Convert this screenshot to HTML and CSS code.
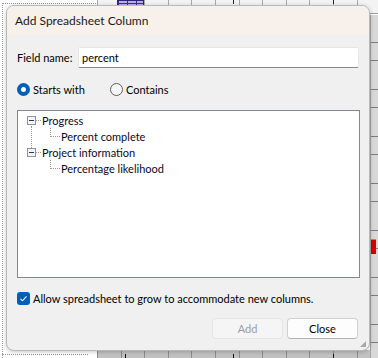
FILE: index.html
```html
<!DOCTYPE html>
<html>
<head>
<meta charset="utf-8">
<title>Add Spreadsheet Column</title>
<link rel="stylesheet" href="styles.css">
</head>
<body>
<div class="stage">
  <div class="bg-dots-v"></div>
  <div class="bg-dots-top"></div>
  <div class="bg-dots-bottom"></div>
  <div class="bg-toprow"></div>
  <div class="bg-tick bg-tick-a"></div>
  <div class="bg-tick bg-tick-b"></div>
  <div class="bg-purple"></div>
  <div class="bg-bottomrow"></div>
  <div class="bg-bottick bg-bottick-a"></div>
  <div class="bg-bottick bg-bottick-b"></div>
  <div class="bg-bottick bg-bottick-c"></div>
  <div class="bg-rightstrip"></div>
  <div class="bg-red"></div>

  <div class="dialog">
    <div class="titlebar">Add Spreadsheet Column</div>
    <div class="content">
      <div class="field-row">
        <label class="field-label">Field name:</label>
        <div class="input">percent</div>
      </div>
      <div class="radio-row">
        <div class="radio-item checked"><span class="radio"></span><span>Starts with</span></div>
        <div class="radio-item"><span class="radio"></span><span>Contains</span></div>
      </div>
      <div class="tree">
        <div class="group has-next">
          <div class="node">
            <svg class="expander" width="9" height="9" viewBox="0 0 9 9"><rect x="0.5" y="0.5" width="8" height="8" fill="#f4f4f4" stroke="#8e949c"/><path d="M2 4.5h5" stroke="#1f3a66" stroke-width="1"/></svg>
            <span class="hline"></span>
            <span class="label">Progress</span>
          </div>
          <div class="child"><span class="elbow"></span><span class="label">Percent complete</span></div>
        </div>
        <div class="group">
          <div class="node">
            <svg class="expander" width="9" height="9" viewBox="0 0 9 9"><rect x="0.5" y="0.5" width="8" height="8" fill="#f4f4f4" stroke="#8e949c"/><path d="M2 4.5h5" stroke="#1f3a66" stroke-width="1"/></svg>
            <span class="hline"></span>
            <span class="label">Project information</span>
          </div>
          <div class="child"><span class="elbow"></span><span class="label">Percentage likelihood</span></div>
        </div>
      </div>
      <div class="check-row">
        <span class="checkbox"><svg width="13" height="13" viewBox="0 0 13 13"><path d="M3.5 6.8l2 2 4-4.4" fill="none" stroke="#fff" stroke-width="1.1"/></svg></span>
        <span>Allow spreadsheet to grow to accommodate new columns.</span>
      </div>
      <div class="button-row">
        <div class="btn disabled">Add</div>
        <div class="btn">Close</div>
      </div>
    </div>
    <div class="grip"></div>
  </div>
</div>
</body>
</html>
```

FILE: styles.css
```css
* { box-sizing: border-box; }
html, body { margin: 0; padding: 0; }
body {
  font-family: Lato, "Liberation Sans", sans-serif;
  font-size: 11px;
  color: #000;
  background: #fff;
  white-space: nowrap;
}
.stage {
  position: relative;
  width: 378px;
  height: 358px;
  overflow: hidden;
  background: #fff;
}
.bg-dots-v {
  position: absolute; left: 2px; top: 3px; bottom: 0; width: 0;
  border-left: 1px dotted #9a9a9a;
}
.bg-dots-top {
  position: absolute; left: 2px; top: 3px; width: 94px; height: 0;
  border-top: 1px dotted #9a9a9a;
}
.bg-dots-bottom {
  position: absolute; left: 2px; top: 354px; width: 86px; height: 0;
  border-top: 1px dotted #9a9a9a;
}
.bg-toprow {
  position: absolute; left: 97px; top: 0; right: 0; height: 14px;
  background-color: #f3f3f3;
  background-image: repeating-linear-gradient(90deg, #a8a8a8 0 1px, transparent 1px 23.6px);
  border-bottom: 1px solid #9c9c9c;
}
.bg-tick { position: absolute; top: 0; width: 1px; height: 4px; background: #222; }
.bg-tick-a { left: 233px; }
.bg-tick-b { left: 333px; }
.bg-purple {
  position: absolute; left: 117px; top: 0; width: 27px; height: 13px;
  background-color: #b9aee6;
  background-image:
    repeating-linear-gradient(0deg, #3a2f8a 0 1px, transparent 1px 4px),
    repeating-linear-gradient(90deg, #3a2f8a 0 1px, transparent 1px 9px);
  border: 1px solid #2c2378;
}
.bg-bottomrow {
  position: absolute; left: 97px; top: 350px; right: 0; bottom: 0;
  background-color: #c2c2c2;
  background-image: repeating-linear-gradient(90deg, #8c8c8c 0 1px, transparent 1px 23.6px);
}
.bg-bottick { position: absolute; top: 354px; width: 1px; height: 4px; background: #111; }
.bg-bottick-a { left: 125px; }
.bg-bottick-b { left: 233px; }
.bg-bottick-c { left: 333px; }
.bg-rightstrip {
  position: absolute; left: 370px; top: 15px; right: 0; bottom: 0;
  background-color: #d8d8d8;
  border-left: 1px solid #a4a4a4;
  background-image: repeating-linear-gradient(180deg, transparent 0 27px, #7c7c7c 27px 28px, transparent 28px 45px, #7c7c7c 45px 46px, transparent 46px 47px);
}
.bg-red {
  position: absolute; left: 371px; top: 239px; width: 5px; height: 15px;
  background: #d40000;
  border-top: 1px solid #ff6060;
}

.dialog {
  position: absolute;
  left: 6px; top: 5px;
  width: 364px; height: 346px;
  background: #f0f0f0;
  border: 1px solid #b9b9b9;
  border-radius: 8px;
  box-shadow: 0 1px 4px rgba(0,0,0,0.22);
  display: flex;
  flex-direction: column;
  overflow: hidden;
}
.titlebar {
  height: 29px;
  flex: none;
  background: #f8f1eb;
  padding-left: 8px;
  display: flex;
  align-items: center;
  font-size: 12px;
  color: #1a1a1a;
}
.content {
  flex: 1;
  padding: 0 9px 0 10px;
  display: flex;
  flex-direction: column;
}
.field-row {
  margin-top: 12px;
  height: 21px;
  display: flex;
  align-items: center;
}
.field-label { width: 61px; flex: none; }
.input {
  flex: 1;
  height: 21px;
  margin-right: 1px;
  background: #fff;
  border: 1px solid #e6e6e6;
  border-bottom: 1px solid #868686;
  border-radius: 2px;
  padding-left: 3px;
  display: flex;
  align-items: center;
}
.radio-row {
  margin-top: 13px;
  height: 16px;
  display: flex;
  align-items: center;
}
.radio-item { display: flex; align-items: center; gap: 3px; }
.radio-item.checked { width: 93px; }
.radio {
  width: 13px; height: 13px;
  border-radius: 50%;
  border: 1px solid #5e5e5e;
  background: #f6f6f6;
  flex: none;
}
.radio-item.checked .radio {
  border: 4px solid #005fb8;
  background: #fff;
}
.tree {
  margin-top: 13px;
  height: 168px;
  background: #fff;
  border: 1px solid #838790;
  padding: 1px 0 0 9px;
  color: #0a0a1e;
}
.group { position: relative; }
.group.has-next::before {
  content: "";
  position: absolute;
  left: 4px; top: 14px; height: 22px;
  border-left: 1px dotted #9a9a9a;
}
.node, .child {
  height: 16px;
  display: flex;
  align-items: center;
}
.expander { flex: none; display: block; }
.hline {
  width: 5px; height: 0;
  border-top: 1px dotted #9a9a9a;
  margin-top: 1px;
}
.node .label { margin-left: 1px; }
.child { padding-left: 23px; }
.elbow {
  align-self: flex-start;
  width: 10px; height: 9px;
  border-left: 1px dotted #9a9a9a;
  border-bottom: 1px dotted #9a9a9a;
  flex: none;
}
.child .label { margin-left: 1px; }
.check-row {
  margin-top: 13px;
  height: 14px;
  display: flex;
  align-items: center;
  gap: 3px;
}
.checkbox {
  width: 13px; height: 13px;
  border-radius: 3px;
  background: #005fb8;
  flex: none;
  display: block;
}
.checkbox svg { display: block; }
.button-row {
  margin-top: 13px;
  display: flex;
  justify-content: flex-end;
  gap: 4px;
  padding-right: 2px;
}
.btn {
  width: 71px; height: 21px;
  border-radius: 4px;
  background: #fdfdfd;
  border: 1px solid #d0d0d0;
  border-bottom-color: #b4b4b4;
  display: flex;
  align-items: center;
  justify-content: center;
}
.btn.disabled {
  background: #f5f5f5;
  border-color: #e5e5e5;
  color: #9d9d9d;
}
.grip {
  position: absolute;
  right: 3px; bottom: 3px;
  width: 6px; height: 6px;
  background-image: radial-gradient(circle, #a8a8a8 0.8px, transparent 1px);
  background-size: 2px 2px;
  clip-path: polygon(100% 0, 100% 100%, 0 100%);
}
```
